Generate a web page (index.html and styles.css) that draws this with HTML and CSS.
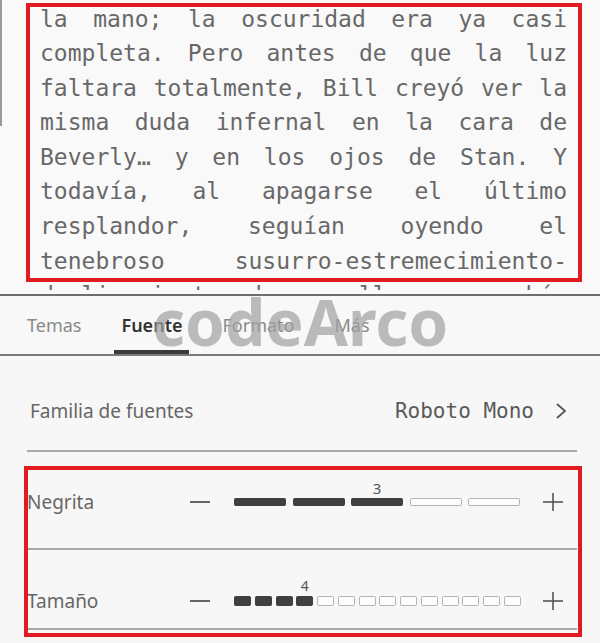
FILE: index.html
```html
<!DOCTYPE html>
<html lang="es">
<head>
<meta charset="utf-8">
<title>Fuente</title>
<link rel="stylesheet" href="styles.css">
</head>
<body>
<div class="screen">
  <div class="reader">
    <div class="page">
      <p class="ln">la mano; la oscuridad era ya casi</p>
      <p class="ln">completa. Pero antes de que la luz</p>
      <p class="ln">faltara totalmente, Bill creyó ver la</p>
      <p class="ln">misma duda infernal en la cara de</p>
      <p class="ln">Beverly… y en los ojos de Stan. Y</p>
      <p class="ln">todavía, al apagarse el último</p>
      <p class="ln">resplandor, seguían oyendo el</p>
      <p class="ln">tenebroso susurro-estremecimiento-</p>
      <p class="ln">deslizamiento de aquello que subía</p>
    </div>
  </div>

  <nav class="tabs">
    <span class="tab">Temas</span>
    <span class="tab active">Fuente</span>
    <span class="tab">Formato</span>
    <span class="tab">Más</span>
  </nav>

  <section class="panel">
    <div class="row family">
      <span class="label">Familia de fuentes</span>
      <span class="value">Roboto Mono</span>
      <svg class="chev" width="12" height="18" viewBox="0 0 12 18"><polyline points="2,2 10,9 2,16" fill="none" stroke="#555" stroke-width="1.8"/></svg>
    </div>
    <div class="rule"></div>

    <div class="row slider weight">
      <span class="label">Negrita</span>
      <svg class="ctl" width="20" height="20" viewBox="0 0 20 20"><line x1="0" y1="10" x2="20" y2="10" stroke="#555" stroke-width="1.8"/></svg>
      <div class="bars wide">
        <span class="seg on"></span>
        <span class="seg on"></span>
        <span class="seg on"><b class="num">3</b></span>
        <span class="seg"></span>
        <span class="seg"></span>
      </div>
      <svg class="ctl plus" width="20" height="20" viewBox="0 0 20 20"><line x1="0" y1="10" x2="20" y2="10" stroke="#555" stroke-width="1.6"/><line x1="10" y1="1" x2="10" y2="19" stroke="#555" stroke-width="1.6"/></svg>
    </div>
    <div class="rule"></div>

    <div class="row slider size">
      <span class="label">Tamaño</span>
      <svg class="ctl" width="20" height="20" viewBox="0 0 20 20"><line x1="0" y1="10" x2="20" y2="10" stroke="#555" stroke-width="1.8"/></svg>
      <div class="bars narrow">
        <span class="seg on"></span>
        <span class="seg on"></span>
        <span class="seg on"></span>
        <span class="seg on"><b class="num">4</b></span>
        <span class="seg"></span>
        <span class="seg"></span>
        <span class="seg"></span>
        <span class="seg"></span>
        <span class="seg"></span>
        <span class="seg"></span>
        <span class="seg"></span>
        <span class="seg"></span>
        <span class="seg"></span>
        <span class="seg"></span>
      </div>
      <svg class="ctl plus" width="20" height="20" viewBox="0 0 20 20"><line x1="0" y1="10" x2="20" y2="10" stroke="#555" stroke-width="1.6"/><line x1="10" y1="1" x2="10" y2="19" stroke="#555" stroke-width="1.6"/></svg>
    </div>
    <div class="rule"></div>
  </section>

  <div class="watermark">codeArco</div>
  <div class="mark mark-text"></div>
  <div class="mark mark-sliders"></div>
</div>
</body>
</html>
```

FILE: styles.css
```css
* { box-sizing: border-box; }

html, body {
  margin: 0;
  padding: 0;
  background: #f7f7f7;
}

.screen {
  position: relative;
  width: 600px;
  height: 643px;
  overflow: hidden;
  background: #f7f7f7;
  font-family: "Noto Sans", "Open Sans", sans-serif;
}

/* reading area */
.reader {
  height: 294px;
  overflow: hidden;
  background-color: #f9f9f9;
  background-image: linear-gradient(#9a9a9a, #9a9a9a);
  background-size: 2px 126px;
  background-repeat: no-repeat;
  padding-top: 1.5px;
}

.page {
  width: 527px;
  height: 288px;
  overflow: hidden;
  margin-left: 40px;
  font-family: "DejaVu Sans Mono", "Liberation Mono", monospace;
  font-size: 23px;
  line-height: 34.6px;
  color: #686868;
}

.ln {
  margin: 0;
  white-space: nowrap;
  text-align: justify;
  text-align-last: justify;
}

/* tabs */
.tabs {
  display: flex;
  height: 62px;
  padding-left: 20px;
  gap: 26px;
  border-top: 2px solid #6e6e6e;
  border-bottom: 2px solid #7a7a7a;
  background: #f8f8f8;
}

.tab {
  display: flex;
  align-items: center;
  padding: 4px 7px 0;
  border-bottom: 4px solid transparent;
  font-size: 18px;
  color: #8a8a8a;
}

.tab.active {
  color: #333;
  font-weight: 600;
  border-bottom-color: #3a3a3a;
}

/* settings panel */
.panel {
  padding: 0 23px 0 27px;
}

.rule {
  height: 2px;
  background: #a8a8a8;
}

.row {
  display: flex;
  align-items: center;
}

.label {
  font-size: 19px;
  color: #666;
}

.family {
  height: 94px;
  padding-top: 16px;
  padding-left: 3px;
}

.family .label { flex: 1; }

.value {
  font-family: "DejaVu Sans Mono", "Liberation Mono", monospace;
  font-size: 21px;
  color: #5a5a5a;
  margin-right: 21px;
}

.chev { margin-right: 10px; }

.slider .label { width: 163px; }

.weight {
  height: 96px;
  padding-top: 4px;
}

.size {
  height: 78px;
  padding-top: 24px;
}

.ctl { flex: none; }

.bars {
  display: flex;
  width: 286px;
  margin: 0 23px 0 24px;
}

.bars.wide { gap: 6.5px; }
.bars.narrow { gap: 3.75px; }

.seg {
  position: relative;
  flex: none;
  border: 1px solid #b3b3b3;
  background: #fcfcfc;
  border-radius: 1.5px;
}

.wide .seg { width: 52px; height: 8px; }
.narrow .seg { width: 17px; height: 10px; }

.seg.on {
  background: #3f3f3f;
  border-color: #3f3f3f;
}

.num {
  position: absolute;
  left: 50%;
  bottom: 100%;
  margin-bottom: 3px;
  transform: translateX(-50%);
  font-size: 15px;
  font-weight: 400;
  line-height: 1;
  color: #555;
}

.narrow .num { font-size: 14px; margin-bottom: 4px; }

/* watermark over the tabs */
.watermark {
  position: absolute;
  left: 152px;
  top: 290px;
  font-size: 64px;
  line-height: 64px;
  font-weight: 700;
  color: rgba(160, 160, 160, 0.7);
  pointer-events: none;
}

/* red annotation frames */
.mark {
  position: absolute;
  border: 4px solid #e21b23;
  pointer-events: none;
}

.mark-text {
  left: 26px;
  top: 3px;
  width: 556px;
  height: 279px;
}

.mark-sliders {
  left: 24px;
  top: 466px;
  width: 558px;
  height: 171px;
}
```
